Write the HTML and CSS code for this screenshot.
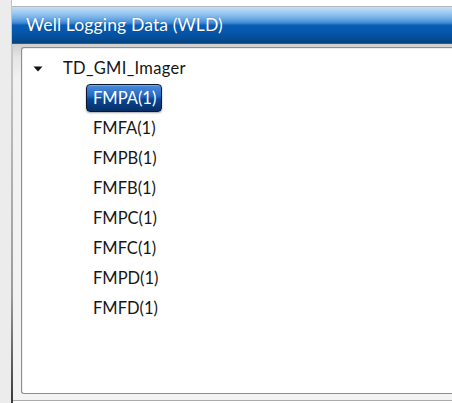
FILE: index.html
```html
<!DOCTYPE html>
<html lang="en">
<head>
<meta charset="utf-8">
<title>Well Logging Data (WLD)</title>
<link rel="stylesheet" href="styles.css">
</head>
<body>
<div class="window">
  <div class="gutter"></div>
  <div class="frame">
    <div class="titlebar">Well Logging Data (WLD)</div>
    <div class="content">
      <div class="tree">
        <ul class="tree-root">
          <li>
            <div class="row">
              <span class="toggle">
                <svg width="10" height="6" viewBox="0 0 10 6"><path d="M0.5 0.5 L9.5 0.5 L5 5.5 Z" fill="#111"/></svg>
              </span>
              <span class="label">TD_GMI_Imager</span>
            </div>
            <ul class="children">
              <li class="row"><span class="label selected">FMPA(1)</span></li>
              <li class="row"><span class="label">FMFA(1)</span></li>
              <li class="row"><span class="label">FMPB(1)</span></li>
              <li class="row"><span class="label">FMFB(1)</span></li>
              <li class="row"><span class="label">FMPC(1)</span></li>
              <li class="row"><span class="label">FMFC(1)</span></li>
              <li class="row"><span class="label">FMPD(1)</span></li>
              <li class="row"><span class="label">FMFD(1)</span></li>
            </ul>
          </li>
        </ul>
      </div>
    </div>
  </div>
</div>
</body>
</html>
```

FILE: styles.css
```css
html, body {
  margin: 0;
  padding: 0;
  width: 452px;
  height: 403px;
  overflow: hidden;
  background: #ffffff;
  font-family: Lato, "Open Sans", sans-serif;
}

.window {
  display: flex;
  height: 403px;
}

.gutter {
  width: 11px;
  background: #ececec;
}

.frame {
  flex: 1;
  display: flex;
  flex-direction: column;
  padding-top: 6px;
  border-left: 1px solid #c4c4c4;
  background: #ffffff;
  position: relative;
}

/* darker left edge toward the bottom of the frame */
.frame::before {
  content: "";
  position: absolute;
  left: -1px;
  top: 44px;
  bottom: 0;
  width: 2px;
  background: linear-gradient(to bottom, #c8c8c8 0%, #9a9a9a 70%, #3a3a3a 100%);
}

.titlebar {
  height: 36px;
  border-top: 1px solid #b6b6b6;
  border-bottom: 1px solid #4d5560;
  background: linear-gradient(to bottom,
    #c3e0f9 0px,
    #a3cdf3 5px,
    #72afe8 11px,
    #4a92d9 15px,
    #2f78c8 17px,
    #0a5db6 18px,
    #0558ad 24px,
    #054e9a 31px,
    #07427f 36px);
  color: #ffffff;
  font-size: 17.6px;
  line-height: 36px;
  padding-left: 14px;
  letter-spacing: 0.1px;
  text-shadow: 0 0 1px rgba(0, 30, 80, 0.35);
  white-space: nowrap;
}

.content {
  flex: 1;
  padding: 3px 0 6px 9px;
  border-bottom: 1px solid #a9a9a9;
  margin-bottom: 2px;
  background: linear-gradient(to bottom, #cfcfcf 0px, #e6e6e6 14px, #f1f1f1 34px, #f3f3f3 100%);
}

.tree {
  height: 100%;
  box-sizing: border-box;
  background: #ffffff;
  border: 1px solid #8e8e8e;
  border-right: none;
  border-radius: 3px 0 0 3px;
  box-shadow: inset 1px 1px 0 #ededed;
  padding-top: 5px;
}

ul {
  list-style: none;
  margin: 0;
  padding: 0;
}

.row {
  display: flex;
  align-items: center;
  height: 30px;
  color: #161616;
  font-size: 16.5px;
}

.tree-root > li > .row {
  padding-left: 11px;
}

.tree-root > li > .row .label {
  letter-spacing: 0.3px;
}

.toggle {
  width: 30px;
  display: flex;
  align-items: center;
  padding-top: 1px;
}

.children .row {
  padding-left: 64px;
}

.label {
  white-space: nowrap;
}

.children .label {
  box-sizing: border-box;
  height: 28px;
  line-height: 26px;
  padding: 0 5px 0 6px;
  border: 1px solid transparent;
  border-radius: 4px;
}

.children .label.selected {
  color: #ffffff;
  border-color: #08182e;
  background: linear-gradient(to bottom,
    #4a8ddc 0%,
    #2468c2 42%,
    #0a4592 56%,
    #062f66 100%);
  box-shadow: inset 0 1px 0 rgba(255, 255, 255, 0.25), 0 1px 2px rgba(0, 0, 0, 0.35);
}
```
